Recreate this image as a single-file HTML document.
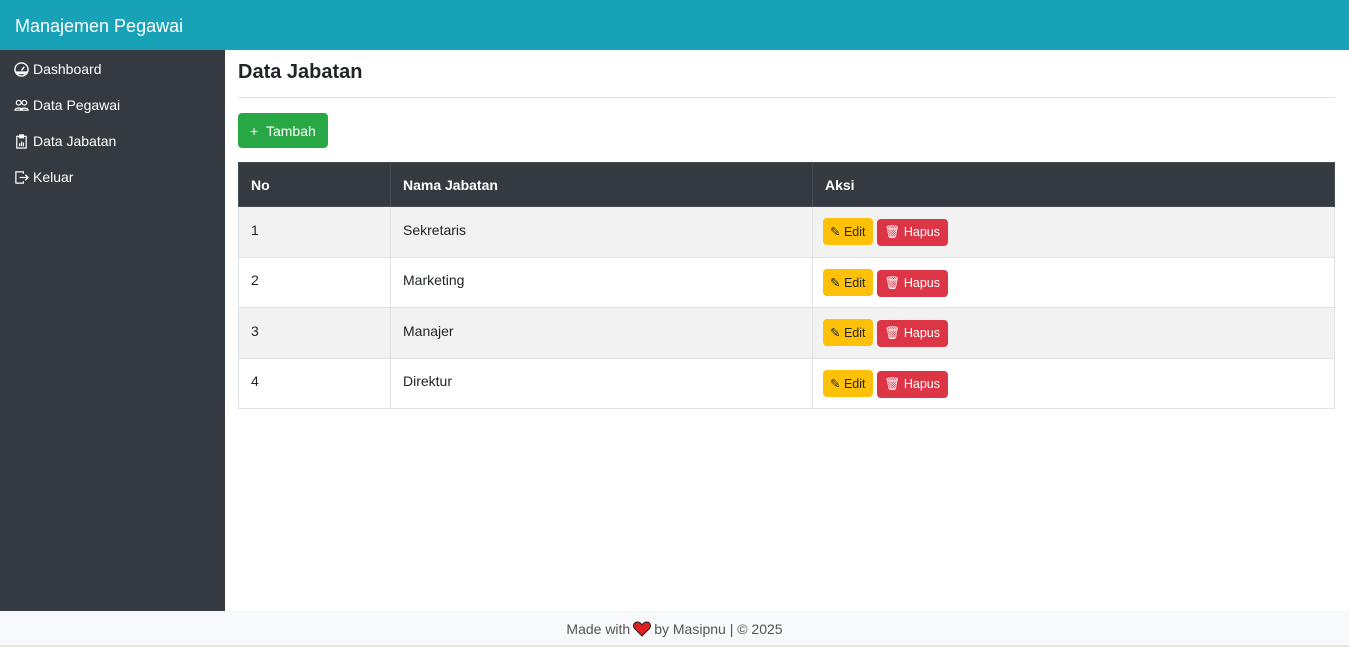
<!DOCTYPE html>
<html><head><meta charset="utf-8"><style>
*{box-sizing:border-box;margin:0;padding:0}
body{width:1349px;height:649px;font-family:"Liberation Sans",sans-serif;background:#fff;position:relative;overflow:hidden;color:#212529}
.top{position:absolute;left:0;top:0;width:1349px;height:50px;background:#17a2b8;color:#fff;font-size:18px;padding:15px 15px;line-height:22px}
.side{position:absolute;left:0;top:50px;width:225px;height:561px;background:#343a40}
.side div{color:#fff;font-size:14px;height:36px;line-height:20px;padding:8px 14px;display:flex;align-items:center;gap:4px}
.side svg{width:15px;height:15px}
.main{position:absolute;left:238px;top:50px;width:1097px}
h2{font-size:20px;font-weight:bold;margin-top:10px;height:38px;line-height:24px;border-bottom:1px solid #dee2e6}
.btn{display:inline-flex;align-items:center;border-radius:4px;color:#fff;font-size:13px}
.add{background:#28a745;height:35px;padding:0 12px;margin-top:15px;gap:6px;font-size:14px}
table{margin-top:14px;width:1097px;border-collapse:collapse;font-size:14px}
th{background:#343a40;color:#fff;text-align:left;height:44px;padding:0 12px;border:1px solid #454d55}
td{height:51px;padding:0 12px 5px;border:1px solid #dee2e6}
tr.s td{height:50px}
td.a{padding:0 10px}
tr:nth-child(even) td{background:#f2f2f2}
.e{background:#ffc107;color:#212529;height:27px;padding:0 7px;gap:3px;font-size:12.5px}
.h{background:#dc3545;height:27px;padding:0 8px;gap:4px;margin-left:4px;font-size:12.5px}
.foot{position:absolute;left:0;top:611px;width:1349px;height:36px;background:#f8f9fa;text-align:center;line-height:36px;font-size:14px;color:#555;border-bottom:2px solid #e9e4d8}
.foot svg{vertical-align:-3px;margin:0 3px}
</style></head><body>
<div class="top">Manajemen Pegawai</div>
<div class="side">
<div style="margin-top:1px"><svg viewBox="0 0 16 16"><circle cx="8" cy="8" r="7" fill="none" stroke="#fff" stroke-width="1.5"/><path d="M2 10h12v3H2z" fill="#fff"/><path d="M8 9l3-4" stroke="#fff" stroke-width="1.5"/></svg>Dashboard</div>
<div><svg viewBox="0 0 16 16" fill="none" stroke="#fff" stroke-width="1.3"><circle cx="5" cy="5" r="2.5"/><circle cx="11" cy="5" r="2.5"/><path d="M1 13c0-3 8-3 8 0zM7 13c0-3 8-3 8 0z"/></svg>Data Pegawai</div>
<div><svg viewBox="0 0 16 16" fill="none" stroke="#fff" stroke-width="1.3"><rect x="3" y="2.5" width="10" height="12.5"/><rect x="6" y="1" width="4" height="3" fill="#fff"/><path d="M6 13v-3M8 13V8M10 13v-4"/></svg>Data Jabatan</div>
<div><svg viewBox="0 0 16 16" fill="none" stroke="#fff" stroke-width="1.3"><path d="M10 4V2H2v12h8v-2M6 8h9M12 5l3 3-3 3"/></svg>Keluar</div>
</div>
<div class="main">
<h2>Data Jabatan</h2>
<span class="btn add">+ &nbsp;Tambah</span>
<table>
<tr><th style="width:152px">No</th><th style="width:422px">Nama Jabatan</th><th>Aksi</th></tr>
<tr><td>1</td><td>Sekretaris</td><td class="a"><span class="btn e">✎ Edit</span><span class="btn h">🗑 Hapus</span></td></tr>
<tr class="s"><td>2</td><td>Marketing</td><td class="a"><span class="btn e">✎ Edit</span><span class="btn h">🗑 Hapus</span></td></tr>
<tr><td>3</td><td>Manajer</td><td class="a"><span class="btn e">✎ Edit</span><span class="btn h">🗑 Hapus</span></td></tr>
<tr class="s"><td>4</td><td>Direktur</td><td class="a"><span class="btn e">✎ Edit</span><span class="btn h">🗑 Hapus</span></td></tr>
</table>
</div>
<div class="foot">Made with<svg width="18" height="16" viewBox="0 0 18 16"><path d="M9 15L2 8C-1 5 1 1 4.5 1 6.5 1 8 2.5 9 4 10 2.5 11.5 1 13.5 1 17 1 19 5 16 8z" fill="#e0201e" stroke="#222" stroke-width="1"/></svg>by Masipnu | © 2025</div>
</body></html>
